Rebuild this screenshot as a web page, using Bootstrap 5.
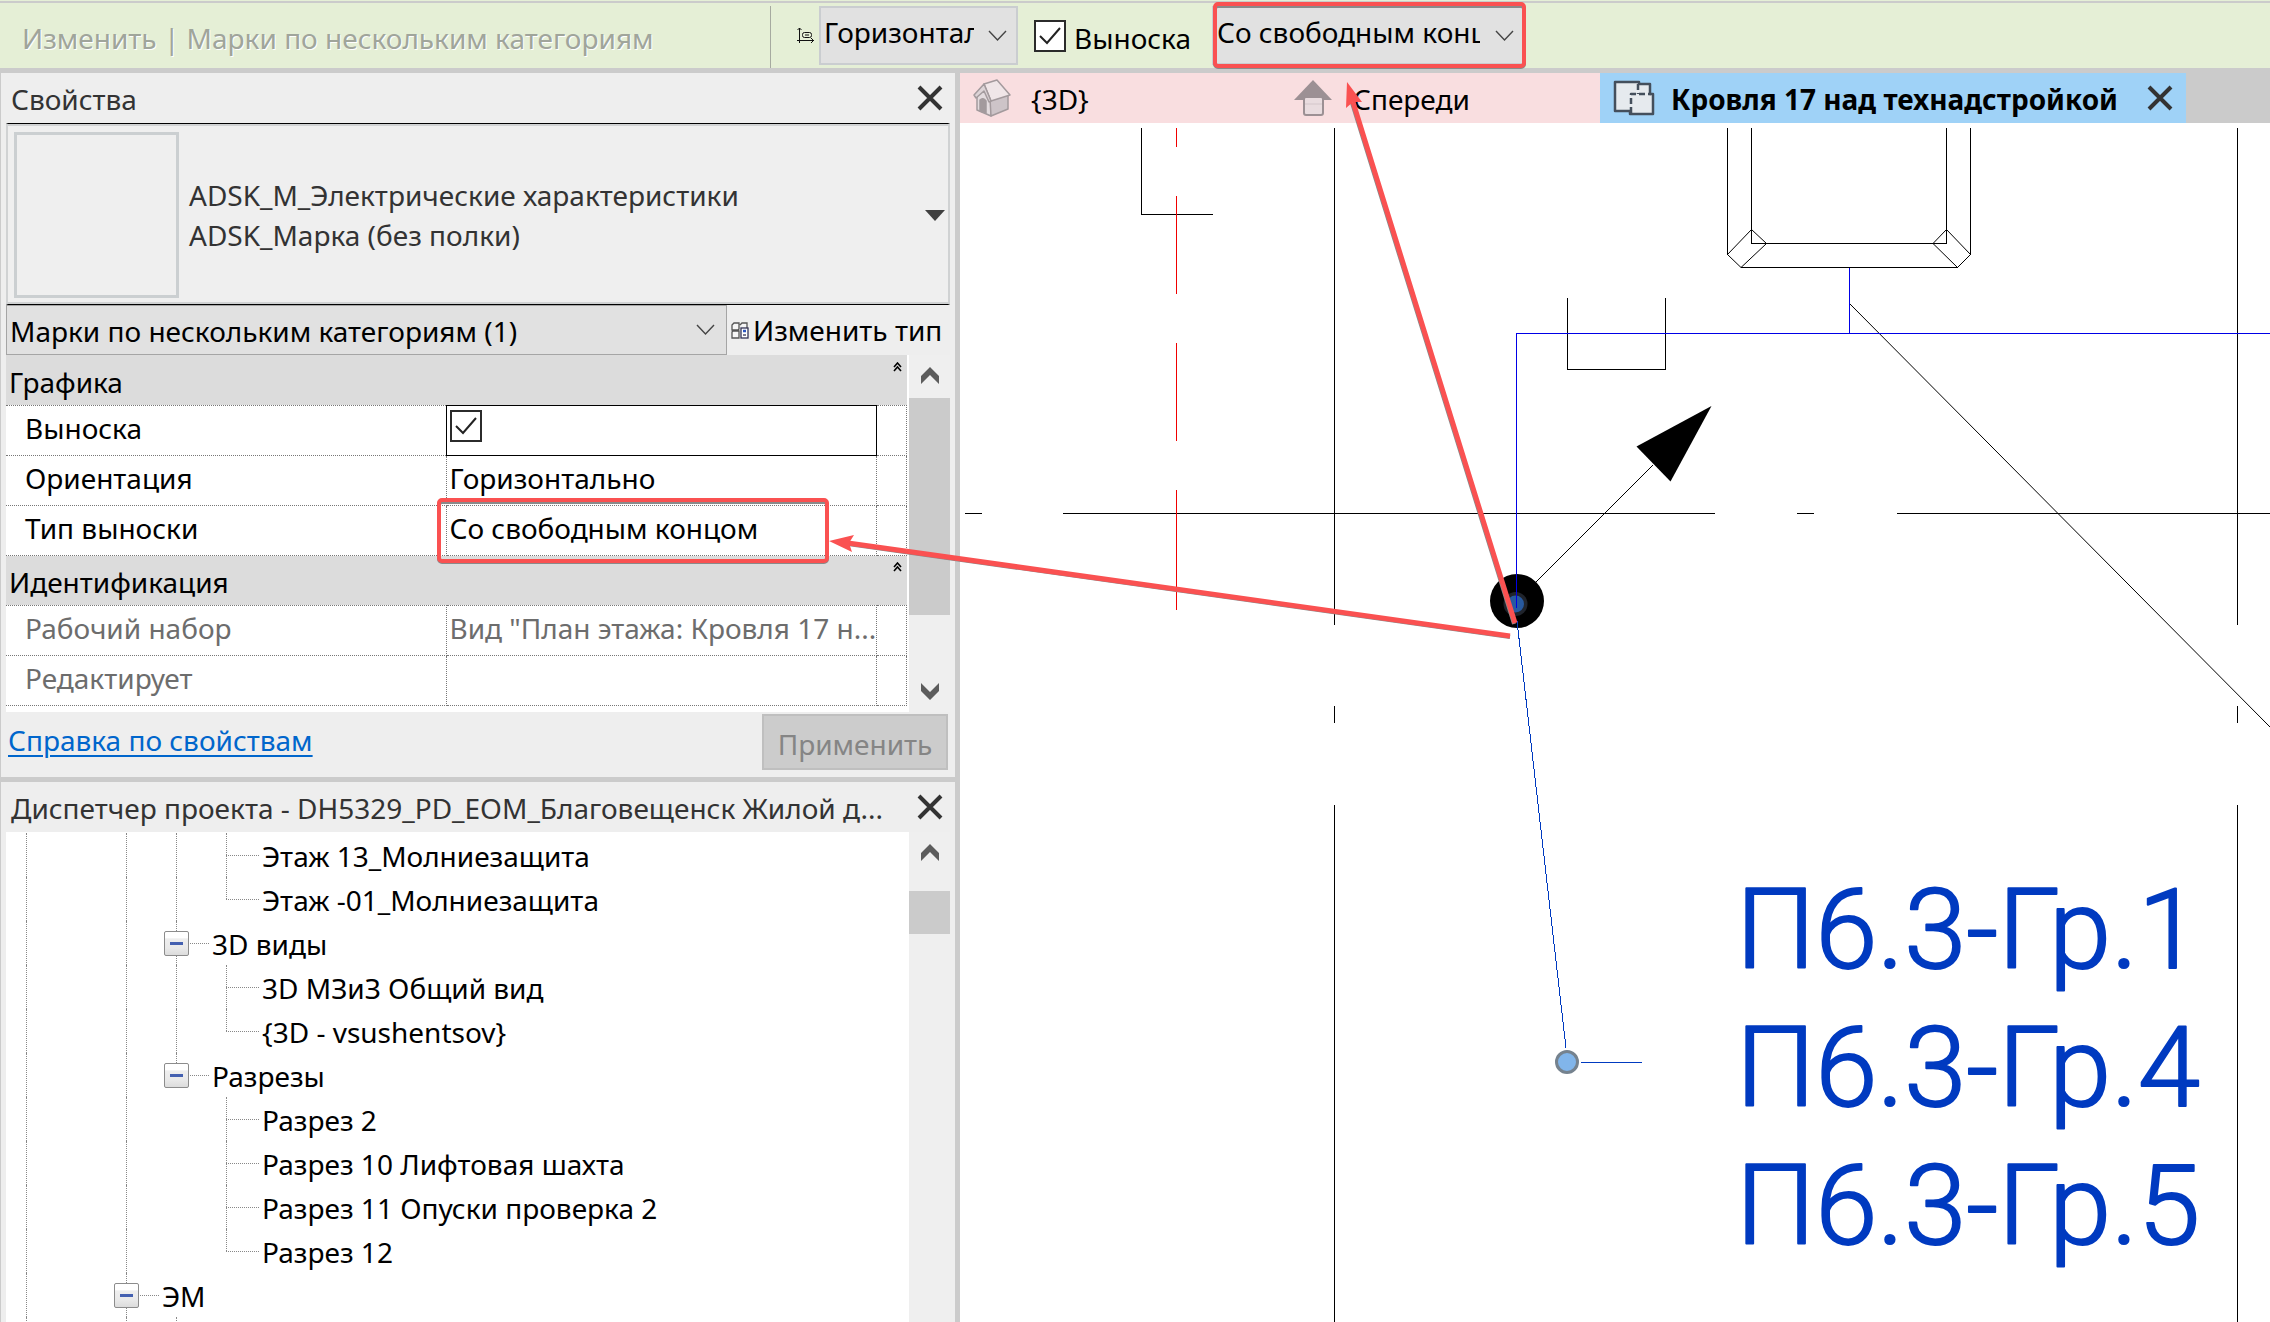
<!DOCTYPE html>
<html lang="ru">
<head>
<meta charset="utf-8">
<meta name="viewport" content="width=device-width, initial-scale=1">
<title>Кровля 17 над технадстройкой</title>
<link rel="stylesheet" href="https://cdn.jsdelivr.net/npm/bootstrap@5.3.0/dist/css/bootstrap.min.css">
<style>
:root { --edge:#cbcbcb; --panel:#eeeeee; --ribbon:#e5efd6; }
body { font-family:"Noto Sans","Open Sans",sans-serif; font-size:28px; line-height:40px; color:#000; background:var(--edge); }
svg { display:block; flex:none; }
button { font:inherit; color:inherit; }

.ribbon { height:73px; padding-top:1px; background:var(--ribbon); border-bottom:5px solid var(--edge); }
.ribbon-row { height:67px; border-top:2px solid var(--edge); }
.ribbon-title { width:771px; padding-left:22px; border-right:1px solid #a6aaa0; color:#a0a59b; text-shadow:1px 1px 0 #fff; height:62px; align-self:flex-end; padding-top:12px; white-space:nowrap; overflow:hidden; }
.align-icon { margin-left:26px; }
.combo { border:2px solid #cacdd0; border-radius:0; background-color:#e1e1e1; color:#000; font-size:28px; line-height:40px; height:59px; padding:0 42px 8px 3px; background-size:19px 12px; background-position:right 9px center;
 background-image:url("data:image/svg+xml,%3csvg xmlns='http://www.w3.org/2000/svg' viewBox='0 0 19 12'%3e%3cpath fill='none' stroke='%23444' stroke-width='1.4' d='M1 1l8.500 9L18 1'/%3e%3c/svg%3e"); }
.combo-orient { width:199px; }
.combo-leader { width:312px; margin-left:21px; background-position:right 8px center; }
.tick.form-check-input { width:32px; height:32px; margin:0; border:2px solid #2b2b2b; border-radius:0; flex:none; background-color:#fff; }
.tick.form-check-input:checked { background-color:#fff; border-color:#2b2b2b; background-size:28px 28px;
 background-image:url("data:image/svg+xml,%3csvg xmlns='http://www.w3.org/2000/svg' viewBox='0 0 28 28'%3e%3cpath fill='none' stroke='%23222' stroke-width='2' d='M4 14l7 7L24 6'/%3e%3c/svg%3e"); }

.side { width:960px; border-left:1px solid var(--edge); border-right:5px solid var(--edge); background:var(--panel); }
.dock-head { height:50px; padding:2px 12px 0 10px; color:#333; }
.dock-body { padding:0 5px; }
.close-x { border:0; background:none; padding:0; width:26px; height:26px; margin-bottom:2px; }
.type-pick { height:182px; border:2px solid #d0d2d3; border-top:1px solid #000; border-bottom:1px solid #000; box-shadow:inset 0 2px #d0d2d3, inset 0 -2px #d0d2d3; background:#efefef; color:#333; padding:2px 3px 0 6px; }
.type-name { padding-left:10px; }
.thumb { width:165px; height:166px; border:3px solid #cbcfd1; }
.combo-filter { width:721px; height:50px; border:1px solid #a5a5a5; padding:2px 42px 0 3px; background-position:right 11px center; }
.props-wrap { height:357px; }
.props { table-layout:fixed; width:901px; height:350px; border-collapse:collapse; background:#fff; }
.props th, .props td { height:50px; padding:0 0 4px 3px; font-weight:400; border:1px dotted #777; border-left:0; white-space:nowrap; overflow:hidden; line-height:40px; }
.props tbody th { padding-left:19px; }
.props .group-row th { background:#dcdcdc; border:0; padding:4px 5px 0 3px; height:50px; }
.props .focus-cell { border:1px solid #000; padding:0 0 8px 3px; vertical-align:middle; }
.muted-row { color:#6d6d6d; }
.rail { width:41px; background:#efefef; }
.rail-thumb { background:#cbcbcb; }
.rail-up { margin-top:12px; margin-bottom:14px; }
.props-thumb { height:217px; }
.tree-thumb { height:43px; }
.rail-down { margin-top:auto; margin-bottom:12px; }
.dock-foot { height:65px; padding:2px 7px 6px 7px; }
.dock-foot a { color:#0066cc; padding-top:6px; text-underline-offset:4px; text-decoration-thickness:2px; }
.apply { width:186px; height:56px; border:2px solid #bfbfbf; background:#cccccc; color:#858585; padding:3px 0 0; }
.split { height:5px; background:var(--edge); }

.tree { background:#fff; overflow:hidden; margin:0; padding:1px 0 0; list-style:none; }
.tree li { display:flex; height:44px; line-height:46px; white-space:nowrap; }
.g { width:50px; flex:none; position:relative; }
.v::before { content:""; position:absolute; left:20px; top:0; bottom:0; border-left:1px dotted #888; }
.half::before { bottom:22px; }
.h::after { content:""; position:absolute; left:20px; width:33px; top:22px; border-top:1px dotted #888; }
.fold { position:absolute; left:8px; top:10px; z-index:1; width:25px; height:25px; padding:0; border:1px solid #8c8c8c; border-radius:2px; background:linear-gradient(#fff 25%,#eee 30%,#e9e9e9 70%,#dcdcdc); }
.fold::after { content:""; position:absolute; left:5px; right:5px; top:10px; height:3px; background:#4460b0; }
.g-text { padding-left:6px; }

.tabs { height:50px; }
.view-tab { height:50px; width:320px; border:0; background:#f9dee0; padding:0 0 0 13px; white-space:nowrap; }
.view-tab span { padding:1px 0 0 20px; }
.view-tab.current { width:586px; background:#9fd2f7; font-weight:700; padding-right:13px; }
.view-tab.current span { padding-left:16px; }
.sheet { background:#fff; overflow:hidden; }
.sheet svg, .callouts { position:absolute; inset:0; width:100%; height:100%; }
.callouts { pointer-events:none; z-index:5; }
.tag-text { font-family:Roboto,"Noto Sans",sans-serif; font-weight:300; font-size:112px; fill:#003ac0; stroke:#003ac0; stroke-width:2px; stroke-linejoin:round; text-anchor:middle; }
</style>
<script src="https://cdn.jsdelivr.net/npm/bootstrap@5.3.0/dist/js/bootstrap.bundle.min.js"></script>
</head>
<body class="vh-100 overflow-hidden d-flex flex-column position-relative">

<header class="ribbon flex-shrink-0">
  <div class="ribbon-row d-flex align-items-center">
    <div class="ribbon-title">Изменить | Марки по нескольким категориям</div>
    <svg class="align-icon" width="18" height="18" viewBox="0 0 18 18" fill="none" stroke="#111" stroke-width="1"><path d="M2.500 1v15M0 13.500h17M.5 3l2-2 2 2M14 11l2.500 2.500L14 16"/><rect x="5.500" y="5.500" width="9" height="5" rx="2"/><path d="M8 8h4"/></svg>
    <select class="form-select combo combo-orient ms-1" aria-label="Ориентация марки"><option>Горизонтально</option></select>
    <input class="form-check-input tick ms-3" type="checkbox" id="leader" checked>
    <label class="ms-2 pt-1" for="leader">Выноска</label>
    <select class="form-select combo combo-leader" aria-label="Тип выноски"><option>Со свободным концом</option></select>
  </div>
</header>

<main class="d-flex flex-grow-1 overflow-hidden">
  <aside class="side d-flex flex-column flex-shrink-0">
    <section>
      <div class="dock-head d-flex align-items-center justify-content-between">
        <span>Свойства</span>
        <button class="close-x" aria-label="Закрыть свойства"><svg width="26" height="26" viewBox="0 0 26 26" stroke="#333" stroke-width="4"><path d="M2 2l22 22M24 2L2 24"/></svg></button>
      </div>
      <div class="dock-body">
        <button class="type-pick w-100 d-flex align-items-center text-start">
          <span class="thumb flex-shrink-0"></span>
          <span class="type-name flex-grow-1">ADSK_М_Электрические характеристики<br>ADSK_Марка (без полки)</span>
          <svg width="20" height="11" viewBox="0 0 20 11" fill="#404040"><path d="M0 0h20L10 11z"/></svg>
        </button>
        <div class="d-flex align-items-center">
          <select class="form-select combo combo-filter" aria-label="Категория"><option>Марки по нескольким категориям (1)</option></select>
          <button class="border-0 bg-transparent p-0 ps-1 d-flex align-items-center text-nowrap">
            <svg class="me-1" width="18" height="18" viewBox="0 0 18 18" fill="#f6f6f6" stroke="#555" stroke-width="1.300"><path d="M1 4l2-2h5v6l-1 1H1zM9 4l2-2h5v6M1 11l1-1h6v7H1z"/><rect x="10" y="7" width="7" height="10" fill="#fff" stroke="#335"/><path d="M12 10h3" stroke="#2b55c0" stroke-width="2.500"/><path d="M12 14h3" stroke="#335"/></svg>
            Изменить тип
          </button>
        </div>
        <div class="props-wrap d-flex">
          <div class="bg-white flex-grow-1">
          <table class="props">
            <colgroup><col style="width:440px"><col style="width:430px"><col></colgroup>
            <tbody>
              <tr class="group-row"><th colspan="3"><span class="d-flex justify-content-between">Графика <svg width="9" height="10" viewBox="0 0 9 10" fill="none" stroke="#000" stroke-width="1.600"><path d="M1 5l3.500-4L8 5M1 9l3.500-4L8 9"/></svg></span></th></tr>
              <tr><th scope="row"><label for="p-leader">Выноска</label></th><td class="focus-cell"><input class="form-check-input tick d-block" type="checkbox" id="p-leader" checked></td><td></td></tr>
              <tr><th scope="row">Ориентация</th><td>Горизонтально</td><td></td></tr>
              <tr><th scope="row">Тип выноски</th><td>Со свободным концом</td><td></td></tr>
              <tr class="group-row"><th colspan="3"><span class="d-flex justify-content-between">Идентификация <svg width="9" height="10" viewBox="0 0 9 10" fill="none" stroke="#000" stroke-width="1.600"><path d="M1 5l3.500-4L8 5M1 9l3.500-4L8 9"/></svg></span></th></tr>
              <tr class="muted-row"><th scope="row">Рабочий набор</th><td>Вид "План этажа: Кровля 17 н...</td><td></td></tr>
              <tr class="muted-row"><th scope="row">Редактирует</th><td></td><td></td></tr>
            </tbody>
          </table>
          </div>
          <div class="rail d-flex flex-column align-items-center">
            <svg class="rail-up" width="18" height="17" viewBox="0 0 18 17" fill="#5c5c5c"><path d="M0 9l9-9 9 9v8L9 8l-9 9z"/></svg>
            <div class="rail-thumb props-thumb w-100"></div>
            <svg class="rail-down" width="18" height="17" viewBox="0 0 18 17" fill="#5c5c5c"><path d="M0 8l9 9 9-9V0L9 9 0 0z"/></svg>
          </div>
        </div>
      </div>
      <div class="dock-foot d-flex justify-content-between">
        <a href="#help">Справка по свойствам</a>
        <button class="apply" disabled>Применить</button>
      </div>
    </section>
    <div class="split flex-shrink-0"></div>
    <section class="d-flex flex-column flex-grow-1 overflow-hidden">
      <div class="dock-head d-flex align-items-center justify-content-between flex-shrink-0">
        <span class="text-nowrap">Диспетчер проекта - DH5329_PD_EOM_Благовещенск Жилой д...</span>
        <button class="close-x" aria-label="Закрыть диспетчер"><svg width="26" height="26" viewBox="0 0 26 26" stroke="#333" stroke-width="4"><path d="M2 2l22 22M24 2L2 24"/></svg></button>
      </div>
      <div class="dock-body d-flex flex-grow-1 overflow-hidden">
        <ul class="tree flex-grow-1">
          <li><i class="g v"></i><i class="g"></i><i class="g v"></i><i class="g v"></i><i class="g v h"></i><span class="g-text">Этаж 13_Молниезащита</span></li>
          <li><i class="g v"></i><i class="g"></i><i class="g v"></i><i class="g v"></i><i class="g v half h"></i><span class="g-text">Этаж -01_Молниезащита</span></li>
          <li><i class="g v"></i><i class="g"></i><i class="g v"></i><span class="g v h"><button class="fold" aria-label="Свернуть 3D виды"></button></span><span class="g-text">3D виды</span></li>
          <li><i class="g v"></i><i class="g"></i><i class="g v"></i><i class="g v"></i><i class="g v h"></i><span class="g-text">3D МЗиЗ Общий вид</span></li>
          <li><i class="g v"></i><i class="g"></i><i class="g v"></i><i class="g v"></i><i class="g v half h"></i><span class="g-text">{3D - vsushentsov}</span></li>
          <li><i class="g v"></i><i class="g"></i><i class="g v"></i><span class="g v half h"><button class="fold" aria-label="Свернуть Разрезы"></button></span><span class="g-text">Разрезы</span></li>
          <li><i class="g v"></i><i class="g"></i><i class="g v"></i><i class="g"></i><i class="g v h"></i><span class="g-text">Разрез 2</span></li>
          <li><i class="g v"></i><i class="g"></i><i class="g v"></i><i class="g"></i><i class="g v h"></i><span class="g-text">Разрез 10 Лифтовая шахта</span></li>
          <li><i class="g v"></i><i class="g"></i><i class="g v"></i><i class="g"></i><i class="g v h"></i><span class="g-text">Разрез 11 Опуски проверка 2</span></li>
          <li><i class="g v"></i><i class="g"></i><i class="g v"></i><i class="g"></i><i class="g v half h"></i><span class="g-text">Разрез 12</span></li>
          <li><i class="g v"></i><i class="g"></i><span class="g v h"><button class="fold" aria-label="Свернуть ЭМ"></button></span><span class="g-text">ЭМ</span></li>
          <li><i class="g v"></i><i class="g"></i><i class="g v"></i><i class="g v"></i></li>
        </ul>
        <div class="rail d-flex flex-column align-items-center flex-shrink-0">
          <svg class="rail-up" width="18" height="17" viewBox="0 0 18 17" fill="#5c5c5c"><path d="M0 9l9-9 9 9v8L9 8l-9 9z"/></svg>
          <div class="rail-thumb tree-thumb w-100 mt-3"></div>
        </div>
      </div>
    </section>
  </aside>

  <section class="d-flex flex-column flex-grow-1 overflow-hidden">
    <nav class="tabs d-flex flex-shrink-0" aria-label="Виды">
      <button class="view-tab d-flex align-items-center">
        <svg width="38" height="38" viewBox="0 0 38 38" stroke="#a39a9d" stroke-width="1.500" stroke-linejoin="round"><path d="M4 14l7-8 7 14v17L4 31z" fill="#e3dbde"/><path d="M17 20l18-5v15l-17 7z" fill="#cdc4c8"/><path d="M11 5L24 1l13 15-19 6z" fill="#f0e6e8"/><path d="M1 16L11 5l7 17-2 1-5-11-8 7z" fill="#ddd4d7"/><path d="M7 32V21q3-3 6 1v12z" fill="#a39a9d"/></svg>
        <span>{3D}</span>
      </button>
      <button class="view-tab d-flex align-items-center">
        <svg width="40" height="38" viewBox="0 0 40 38"><path d="M20 1L1 21h38z" fill="#9c9094"/><rect x="11" y="18" width="19" height="18" rx="2" fill="#e9dcdf" stroke="#9c9094" stroke-width="2"/><path d="M12 25h17" stroke="#d3c6ca"/></svg>
        <span>Спереди</span>
      </button>
      <button class="view-tab current d-flex align-items-center">
        <svg width="42" height="38" viewBox="0 0 42 38" stroke="#444f5c" stroke-width="2.500" stroke-linejoin="round"><path d="M2 3h24v2h11v10h3v20H17v-3H2z" fill="#e6eaee"/><path d="M25 5v10M18 34V15h20" fill="none" stroke-dasharray="6 3"/></svg>
        <span>Кровля 17 над технадстройкой</span>
        <svg class="ms-auto" width="26" height="26" viewBox="0 0 26 26" stroke="#333" stroke-width="4"><path d="M2 2l22 22M24 2L2 24"/></svg>
      </button>
    </nav>
    <div class="sheet flex-grow-1 position-relative">
      <svg viewBox="960 123 1310 1199" preserveAspectRatio="xMinYMin slice" fill="none" stroke="#000" stroke-width="1">
        <g shape-rendering="crispEdges">
          <path d="M1141.500 128v86.500H1213M1334.500 128v497M1334.500 706v17M1334.500 805v517M2237.500 128v497M2237.500 706v17M2237.500 805v517"/>
          <path d="M965 513.500h17M1063 513.500h652M1797 513.500h17M1897 513.500h373"/>
          <path d="M1727.500 128v126.500M1741 267.500H1957.500M1970.500 254.500V128M1751.500 128v115.500H1946.500V128"/>
          <path d="M1567.500 298v71.500h98V298"/>
          <path d="M1176.500 128v19M1176.500 196v98M1176.500 343v98M1176.500 490v120" stroke="#f00000"/>
        </g>
        <path d="M1741 267.500L1727.500 254.500 1751.500 229.500 1766.500 243.500zM1957.500 267.500L1970.500 254.500 1946.500 229.500 1933 243.500zM1849 303L2270 727M1653 465L1536 582"/>
        <path d="M1711.500 406L1636.500 446.500 1670.500 481.500z" fill="#000" stroke="none"/>
        <circle cx="1517" cy="601" r="27" fill="#000" stroke="none"/>
        <circle cx="1515.500" cy="604" r="12" fill="#20242c" stroke="none"/>
        <circle cx="1515.500" cy="604" r="8.500" fill="#27599f" stroke="none"/>
        <g shape-rendering="crispEdges">
          <path d="M2270 333.500H1516.500V608M1849.500 268v65" stroke="#0000e6"/>
          <path d="M1517 621L1566 1048M1581 1062.500h61" stroke="#003ac0"/>
        </g>
        <circle cx="1567" cy="1062" r="10.500" fill="#81b5ea" stroke="#75828e" stroke-width="3"/>
        <g>
          <text class="tag-text" x="1968" y="968">П6.3-Гр.1</text>
          <text class="tag-text" x="1968" y="1106">П6.3-Гр.4</text>
          <text class="tag-text" x="1968" y="1244">П6.3-Гр.5</text>
        </g>
      </svg>
    </div>
  </section>
</main>

<!-- Callout frames and arrows over the whole window -->
<svg class="callouts" viewBox="0 0 2270 1322" preserveAspectRatio="xMinYMin meet" aria-hidden="true">
  <g fill="none" stroke="#8a8a8a" stroke-width="4">
    <rect x="1215" y="6" width="309" height="61" rx="3"/>
    <rect x="439" y="502" width="388" height="60" rx="3"/>
    <path d="M1514 624L1352 103M1510 637L848 544"/>
  </g>
  <g fill="none" stroke="#fa5151" stroke-width="4">
    <rect x="1215" y="4" width="309" height="62" rx="3"/>
    <rect x="439" y="500" width="388" height="61" rx="3"/>
    <path d="M1515 623L1353 102M1510 636L848 543" stroke-width="5"/>
    <path stroke="none" fill="#fa5151" d="M1347 82L1362 102 1353 102 1346 108zM829 541L854 535 849 543 852 552z"/>
  </g>
</svg>
</body>
</html>
